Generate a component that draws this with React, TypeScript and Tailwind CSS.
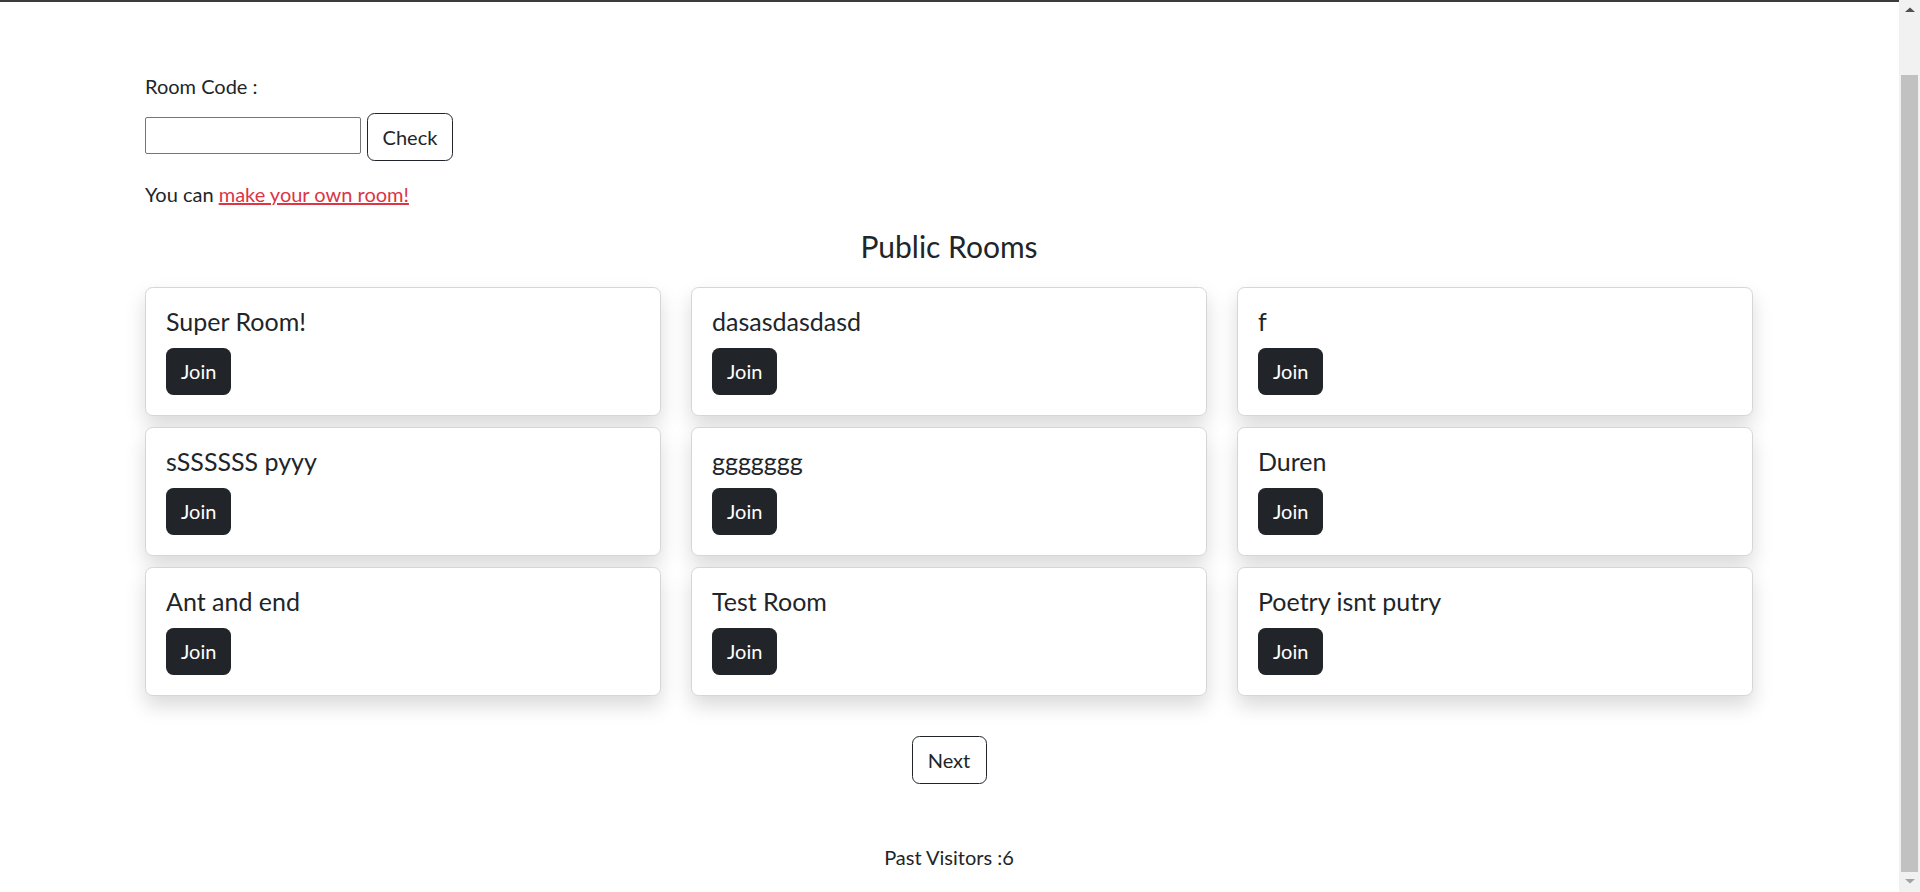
import React from "react";

const rooms = [
  "Super Room!",
  "dasasdasdasd",
  "f",
  "sSSSSSS pyyy",
  "ggggggg",
  "Duren",
  "Ant and end",
  "Test Room",
  "Poetry isnt putry",
];

function Scrollbar() {
  return (
    <div className="fixed right-0 top-0 flex h-[892px] w-[21px] flex-col items-center bg-[#f1f1f1]">
      <svg width="12" height="8" viewBox="0 0 12 8" className="mt-[6px]">
        <path d="M1 6 L6 1.5 L11 6 Z" fill="#505050" />
      </svg>
      <div className="mt-[61px] h-[797px] w-[17px] bg-[#c1c1c1]" />
      <svg width="12" height="8" viewBox="0 0 12 8" className="mt-[5px]">
        <path d="M1 2 L6 6.5 L11 2 Z" fill="#a3a3a3" />
      </svg>
    </div>
  );
}

export default function App() {
  return (
    <div className="min-h-[950px] border-t-2 border-[#3c3c3c] bg-white font-[Lato,sans-serif] text-[20px] leading-[30px] text-[#212529]">
      <div className="ml-[145px] w-[1608px] pt-[69px] pb-[60px]">
        <div>Room Code :</div>
        <div className="mt-[12px] flex items-start gap-[6px]">
          <input
            type="text"
            className="mt-[4px] h-[37px] w-[216px] rounded-[2px] border border-[#767676] bg-white px-[3px] outline-none"
          />
          <button className="h-[47.5px] w-[86px] rounded-[7.5px] border border-[#212529] bg-white text-[20px] text-[#212529]">
            Check
          </button>
        </div>
        <div className="mt-[18px]">
          You can{" "}
          <a href="#" className="text-[#dc3545] underline">
            make your own room!
          </a>
        </div>
        <h4 className="mt-[19px] text-center text-[30px] leading-[36px]">Public Rooms</h4>
        <div className="mt-[23px] grid grid-cols-3 gap-x-[30px] gap-y-[11px]">
          {rooms.map((r) => (
            <div
              key={r}
              className="h-[129px] rounded-[7.5px] border border-[#d6d6d6] bg-white p-[20px] shadow-[0_10px_20px_rgba(0,0,0,0.15)]"
            >
              <h5 className="mb-[14px] text-[25px] leading-[26px]">{r}</h5>
              <button className="h-[47px] rounded-[7.5px] bg-[#212529] px-[15px] text-[20px] text-white">
                Join
              </button>
            </div>
          ))}
        </div>
        <div className="mt-[40px] flex justify-center">
          <button className="h-[48px] w-[75px] rounded-[7.5px] border border-[#212529] bg-white text-[20px] text-[#212529]">
            Next
          </button>
        </div>
        <div className="mt-[58px] text-center">Past Visitors :6</div>
      </div>
      <Scrollbar />
    </div>
  );
}
